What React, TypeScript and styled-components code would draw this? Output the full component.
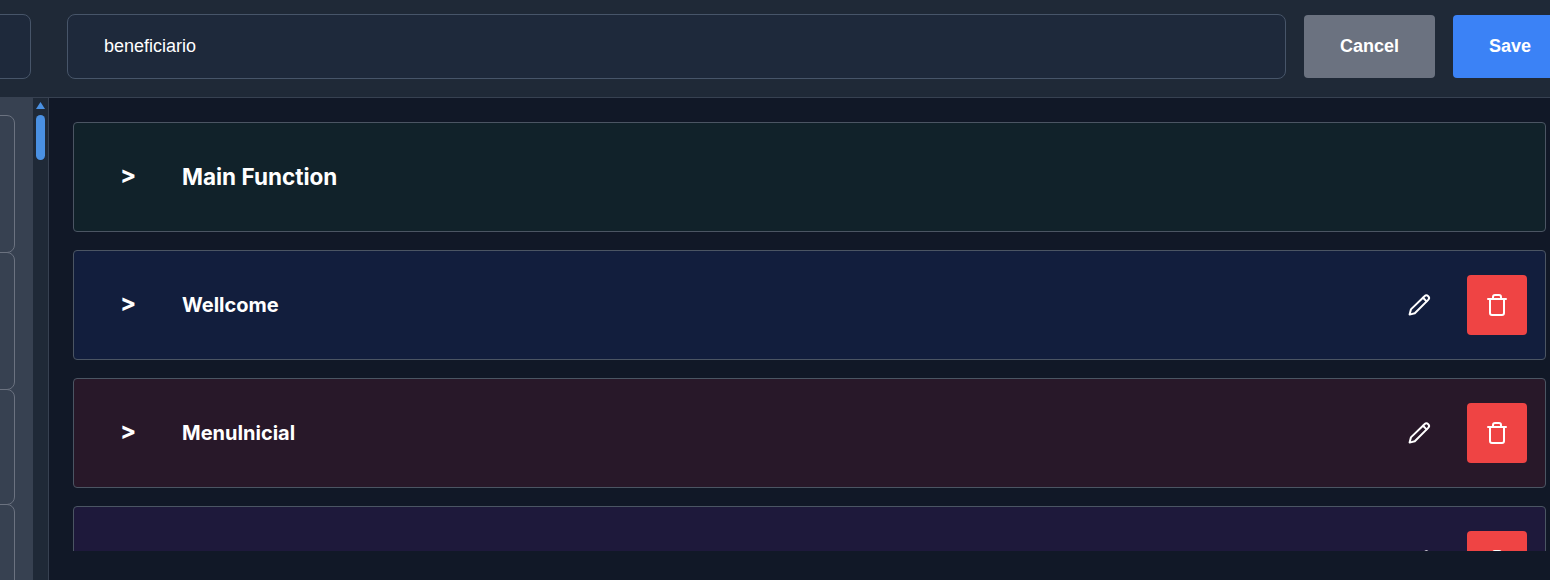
import React from "react";
import styled, { createGlobalStyle } from "styled-components";

const GlobalStyle = createGlobalStyle`
  html, body {
    margin: 0;
    padding: 0;
    height: 100%;
    overflow: hidden;
    background: #111827;
  }
  body {
    font-family: "Liberation Sans", Arial, sans-serif;
  }
`;

const Page = styled.div`
  width: 1550px;
  height: 580px;
  display: flex;
  flex-direction: column;
  overflow: hidden;
`;

const Header = styled.header`
  height: 98px;
  flex: none;
  display: flex;
  align-items: flex-start;
  gap: 18px;
  padding: 14px 0 0 0;
  box-sizing: border-box;
  background: #1f2937;
  border-bottom: 1px solid #374151;
  margin-left: -260px;
  width: 1810px;
`;

const Field = styled.div<{ $width: number; $gap?: number }>`
  width: ${(p) => p.$width}px;
  margin-right: ${(p) => p.$gap ?? 0}px;
  height: 65px;
  flex: none;
  box-sizing: border-box;
  display: flex;
  align-items: center;
  padding: 0 36px;
  background: #1e293b;
  border: 1px solid #475569;
  border-radius: 8px;
  color: #fff;
  font-size: 18px;
`;

const Button = styled.button<{ $bg: string; $width: number }>`
  width: ${(p) => p.$width}px;
  height: 63px;
  flex: none;
  margin-top: 1px;
  padding: 0;
  border: 0;
  border-radius: 4px;
  background: ${(p) => p.$bg};
  color: #fff;
  font-family: inherit;
  font-size: 18px;
  font-weight: 700;
`;

const Body = styled.div`
  flex: 1;
  min-height: 0;
  display: flex;
`;

const SidePanel = styled.aside`
  width: 33px;
  flex: none;
  background: #374151;
  overflow: hidden;
  margin-top: -1px;
  padding-top: 18px;
  box-sizing: border-box;
  display: flex;
  flex-direction: column;
  align-items: flex-end;
`;

const SideCard = styled.div<{ $height: number }>`
  width: 200px;
  height: ${(p) => p.$height}px;
  flex: none;
  margin-right: 18px;
  box-sizing: border-box;
  border: 1px solid #6b7280;
  border-radius: 8px;
  background: #374151;
  margin-bottom: -1px;
`;

const ScrollTrack = styled.div`
  width: 15px;
  flex: none;
  background: #1f2937;
  position: relative;
`;

const ScrollArrow = styled.div`
  position: absolute;
  left: 3px;
  top: 4px;
  width: 9px;
  height: 7px;
  background: #4a90e2;
  clip-path: polygon(50% 0, 100% 100%, 0 100%);
`;

const ScrollThumb = styled.div`
  position: absolute;
  left: 3px;
  top: 17px;
  width: 9px;
  height: 45px;
  border-radius: 5px;
  background: #4a90e2;
`;

const Main = styled.main`
  flex: 1;
  min-width: 0;
  border-left: 1px solid #374151;
  background: #111827;
  padding: 24px 4px 29px 24px;
  box-sizing: border-box;
`;

const CardList = styled.div`
  height: 100%;
  overflow: hidden;
  display: flex;
  flex-direction: column;
  gap: 18px;
`;

const Card = styled.section<{ $bg: string }>`
  height: 110px;
  flex: none;
  box-sizing: border-box;
  display: flex;
  align-items: center;
  padding: 0 18px 0 47px;
  background: ${(p) => p.$bg};
  border: 1px solid #4b5563;
  border-radius: 4px;
`;

const Chevron = styled.span`
  width: 62px;
  flex: none;
  margin-left: -1px;
  margin-bottom: 5px;
  color: #fff;
  font-family: Inter, sans-serif;
  font-size: 24px;
  font-weight: 700;
`;

const Title = styled.h3<{ $large?: boolean }>`
  flex: 1;
  margin: 0 0 ${(p) => (p.$large ? 2 : 0)}px;
  color: #fff;
  font-family: Inter, sans-serif;
  font-size: ${(p) => (p.$large ? 22.5 : 20)}px;
  font-weight: 700;
`;

const EditIcon = styled.svg`
  width: 24px;
  height: 24px;
  flex: none;
  margin-right: 36px;
  fill: none;
  stroke: #fff;
  stroke-width: 2;
  stroke-linecap: round;
  stroke-linejoin: round;
`;

const DeleteButton = styled.button`
  width: 60px;
  height: 60px;
  flex: none;
  display: flex;
  align-items: center;
  justify-content: center;
  padding: 0;
  border: 0;
  border-radius: 4px;
  background: #ef4444;
`;

const TrashIcon = styled.svg`
  width: 24px;
  height: 24px;
  fill: none;
  stroke: #fff;
  stroke-width: 2;
  stroke-linecap: round;
  stroke-linejoin: round;
`;

const cards = [
  { name: "Main Function", bg: "#11222a", main: true },
  { name: "Wellcome", bg: "#121e3d" },
  { name: "MenuInicial", bg: "#281829" },
  { name: "", bg: "#1e193b" },
];

const sideHeights = [138, 138, 116, 138];

export default function App() {
  return (
    <Page>
      <GlobalStyle />
      <Header>
        <Field $width={291} $gap={18} />
        <Field $width={1219}>beneficiario</Field>
        <Button $bg="#6b7280" $width={131}>Cancel</Button>
        <Button $bg="#3b82f6" $width={114}>Save</Button>
      </Header>
      <Body>
        <SidePanel>
          {sideHeights.map((h, i) => (
            <SideCard key={i} $height={h} />
          ))}
        </SidePanel>
        <ScrollTrack>
          <ScrollArrow />
          <ScrollThumb />
        </ScrollTrack>
        <Main>
          <CardList>
            {cards.map((card) => (
              <Card key={card.bg} $bg={card.bg}>
                {card.name ? <Chevron>&gt;</Chevron> : null}
                <Title $large={card.main}>{card.name}</Title>
                {!card.main && (
                  <>
                    <EditIcon viewBox="0 0 24 24">
                      <path d="M17.5 3.2a2.6 2.6 0 0 1 3.7 3.7L7.8 20.3 2.6 21.6l1.3-5.2z" />
                      <path d="M16 4.8l3.6 3.6" />
                    </EditIcon>
                    <DeleteButton aria-label="Delete">
                      <TrashIcon viewBox="0 0 24 24">
                        <path d="M3 6h18" />
                        <path d="M19 6v14a2 2 0 0 1-2 2H7a2 2 0 0 1-2-2V6" />
                        <path d="M8 6V4a2 2 0 0 1 2-2h4a2 2 0 0 1 2 2v2" />
                      </TrashIcon>
                    </DeleteButton>
                  </>
                )}
              </Card>
            ))}
          </CardList>
        </Main>
      </Body>
    </Page>
  );
}
